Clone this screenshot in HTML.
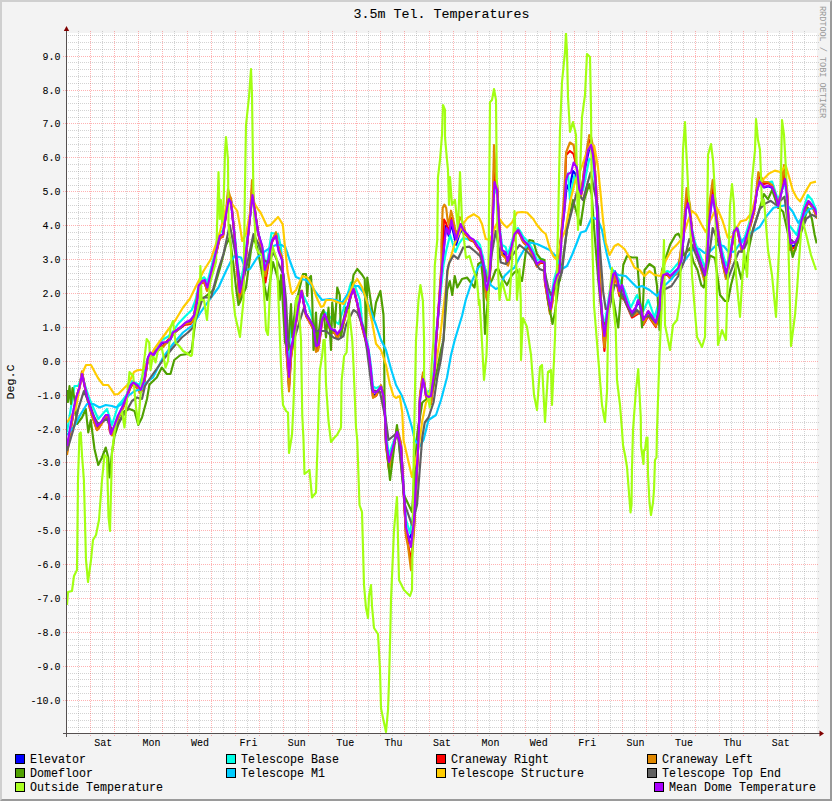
<!DOCTYPE html>
<html><head><meta charset="utf-8"><style>
html,body{margin:0;padding:0;background:#f3f3f3;}
body{width:832px;height:801px;overflow:hidden;position:relative;}
.frame{position:absolute;left:0;top:0;width:832px;height:801px;box-sizing:border-box;background:#f3f3f3;
border-top:2px solid #cfcfcf;border-left:2px solid #cfcfcf;border-right:2px solid #9a9a9a;border-bottom:2px solid #9a9a9a;}
svg{position:absolute;left:0;top:0;}
text{font-family:"Liberation Mono",monospace;}
</style></head><body><div class="frame"></div>
<svg width="832" height="801" viewBox="0 0 832 801">
<defs><clipPath id="pc"><rect x="67" y="33" width="750" height="700"/></clipPath></defs>
<rect x="67" y="33" width="750" height="700" fill="#fff"/><g stroke="rgba(128,128,128,0.35)" stroke-width="1" stroke-dasharray="1 1" shape-rendering="crispEdges"><line x1="66" y1="727.5" x2="819" y2="727.5"/><line x1="66" y1="720.5" x2="819" y2="720.5"/><line x1="66" y1="713.5" x2="819" y2="713.5"/><line x1="66" y1="706.5" x2="819" y2="706.5"/><line x1="66" y1="693.5" x2="819" y2="693.5"/><line x1="66" y1="686.5" x2="819" y2="686.5"/><line x1="66" y1="679.5" x2="819" y2="679.5"/><line x1="66" y1="673.5" x2="819" y2="673.5"/><line x1="66" y1="659.5" x2="819" y2="659.5"/><line x1="66" y1="652.5" x2="819" y2="652.5"/><line x1="66" y1="645.5" x2="819" y2="645.5"/><line x1="66" y1="639.5" x2="819" y2="639.5"/><line x1="66" y1="625.5" x2="819" y2="625.5"/><line x1="66" y1="618.5" x2="819" y2="618.5"/><line x1="66" y1="612.5" x2="819" y2="612.5"/><line x1="66" y1="605.5" x2="819" y2="605.5"/><line x1="66" y1="591.5" x2="819" y2="591.5"/><line x1="66" y1="584.5" x2="819" y2="584.5"/><line x1="66" y1="578.5" x2="819" y2="578.5"/><line x1="66" y1="571.5" x2="819" y2="571.5"/><line x1="66" y1="557.5" x2="819" y2="557.5"/><line x1="66" y1="551.5" x2="819" y2="551.5"/><line x1="66" y1="544.5" x2="819" y2="544.5"/><line x1="66" y1="537.5" x2="819" y2="537.5"/><line x1="66" y1="523.5" x2="819" y2="523.5"/><line x1="66" y1="517.5" x2="819" y2="517.5"/><line x1="66" y1="510.5" x2="819" y2="510.5"/><line x1="66" y1="503.5" x2="819" y2="503.5"/><line x1="66" y1="490.5" x2="819" y2="490.5"/><line x1="66" y1="483.5" x2="819" y2="483.5"/><line x1="66" y1="476.5" x2="819" y2="476.5"/><line x1="66" y1="469.5" x2="819" y2="469.5"/><line x1="66" y1="456.5" x2="819" y2="456.5"/><line x1="66" y1="449.5" x2="819" y2="449.5"/><line x1="66" y1="442.5" x2="819" y2="442.5"/><line x1="66" y1="435.5" x2="819" y2="435.5"/><line x1="66" y1="422.5" x2="819" y2="422.5"/><line x1="66" y1="415.5" x2="819" y2="415.5"/><line x1="66" y1="408.5" x2="819" y2="408.5"/><line x1="66" y1="401.5" x2="819" y2="401.5"/><line x1="66" y1="388.5" x2="819" y2="388.5"/><line x1="66" y1="381.5" x2="819" y2="381.5"/><line x1="66" y1="374.5" x2="819" y2="374.5"/><line x1="66" y1="368.5" x2="819" y2="368.5"/><line x1="66" y1="354.5" x2="819" y2="354.5"/><line x1="66" y1="347.5" x2="819" y2="347.5"/><line x1="66" y1="340.5" x2="819" y2="340.5"/><line x1="66" y1="334.5" x2="819" y2="334.5"/><line x1="66" y1="320.5" x2="819" y2="320.5"/><line x1="66" y1="313.5" x2="819" y2="313.5"/><line x1="66" y1="307.5" x2="819" y2="307.5"/><line x1="66" y1="300.5" x2="819" y2="300.5"/><line x1="66" y1="286.5" x2="819" y2="286.5"/><line x1="66" y1="279.5" x2="819" y2="279.5"/><line x1="66" y1="273.5" x2="819" y2="273.5"/><line x1="66" y1="266.5" x2="819" y2="266.5"/><line x1="66" y1="252.5" x2="819" y2="252.5"/><line x1="66" y1="246.5" x2="819" y2="246.5"/><line x1="66" y1="239.5" x2="819" y2="239.5"/><line x1="66" y1="232.5" x2="819" y2="232.5"/><line x1="66" y1="218.5" x2="819" y2="218.5"/><line x1="66" y1="212.5" x2="819" y2="212.5"/><line x1="66" y1="205.5" x2="819" y2="205.5"/><line x1="66" y1="198.5" x2="819" y2="198.5"/><line x1="66" y1="185.5" x2="819" y2="185.5"/><line x1="66" y1="178.5" x2="819" y2="178.5"/><line x1="66" y1="171.5" x2="819" y2="171.5"/><line x1="66" y1="164.5" x2="819" y2="164.5"/><line x1="66" y1="151.5" x2="819" y2="151.5"/><line x1="66" y1="144.5" x2="819" y2="144.5"/><line x1="66" y1="137.5" x2="819" y2="137.5"/><line x1="66" y1="130.5" x2="819" y2="130.5"/><line x1="66" y1="117.5" x2="819" y2="117.5"/><line x1="66" y1="110.5" x2="819" y2="110.5"/><line x1="66" y1="103.5" x2="819" y2="103.5"/><line x1="66" y1="96.5" x2="819" y2="96.5"/><line x1="66" y1="83.5" x2="819" y2="83.5"/><line x1="66" y1="76.5" x2="819" y2="76.5"/><line x1="66" y1="69.5" x2="819" y2="69.5"/><line x1="66" y1="62.5" x2="819" y2="62.5"/><line x1="66" y1="49.5" x2="819" y2="49.5"/><line x1="66" y1="42.5" x2="819" y2="42.5"/><line x1="66" y1="35.5" x2="819" y2="35.5"/><line x1="78.5" y1="31" x2="78.5" y2="736"/><line x1="102.5" y1="31" x2="102.5" y2="736"/><line x1="126.5" y1="31" x2="126.5" y2="736"/><line x1="150.5" y1="31" x2="150.5" y2="736"/><line x1="174.5" y1="31" x2="174.5" y2="736"/><line x1="199.5" y1="31" x2="199.5" y2="736"/><line x1="223.5" y1="31" x2="223.5" y2="736"/><line x1="247.5" y1="31" x2="247.5" y2="736"/><line x1="271.5" y1="31" x2="271.5" y2="736"/><line x1="295.5" y1="31" x2="295.5" y2="736"/><line x1="320.5" y1="31" x2="320.5" y2="736"/><line x1="344.5" y1="31" x2="344.5" y2="736"/><line x1="368.5" y1="31" x2="368.5" y2="736"/><line x1="392.5" y1="31" x2="392.5" y2="736"/><line x1="416.5" y1="31" x2="416.5" y2="736"/><line x1="441.5" y1="31" x2="441.5" y2="736"/><line x1="465.5" y1="31" x2="465.5" y2="736"/><line x1="489.5" y1="31" x2="489.5" y2="736"/><line x1="513.5" y1="31" x2="513.5" y2="736"/><line x1="537.5" y1="31" x2="537.5" y2="736"/><line x1="562.5" y1="31" x2="562.5" y2="736"/><line x1="586.5" y1="31" x2="586.5" y2="736"/><line x1="610.5" y1="31" x2="610.5" y2="736"/><line x1="634.5" y1="31" x2="634.5" y2="736"/><line x1="658.5" y1="31" x2="658.5" y2="736"/><line x1="683.5" y1="31" x2="683.5" y2="736"/><line x1="707.5" y1="31" x2="707.5" y2="736"/><line x1="731.5" y1="31" x2="731.5" y2="736"/><line x1="755.5" y1="31" x2="755.5" y2="736"/><line x1="779.5" y1="31" x2="779.5" y2="736"/><line x1="804.5" y1="31" x2="804.5" y2="736"/></g><g stroke="rgba(255,0,0,0.30)" stroke-width="1" stroke-dasharray="1 1" shape-rendering="crispEdges"><line x1="63" y1="700.5" x2="819" y2="700.5"/><line x1="63" y1="666.5" x2="819" y2="666.5"/><line x1="63" y1="632.5" x2="819" y2="632.5"/><line x1="63" y1="598.5" x2="819" y2="598.5"/><line x1="63" y1="564.5" x2="819" y2="564.5"/><line x1="63" y1="530.5" x2="819" y2="530.5"/><line x1="63" y1="496.5" x2="819" y2="496.5"/><line x1="63" y1="462.5" x2="819" y2="462.5"/><line x1="63" y1="429.5" x2="819" y2="429.5"/><line x1="63" y1="395.5" x2="819" y2="395.5"/><line x1="63" y1="361.5" x2="819" y2="361.5"/><line x1="63" y1="327.5" x2="819" y2="327.5"/><line x1="63" y1="293.5" x2="819" y2="293.5"/><line x1="63" y1="259.5" x2="819" y2="259.5"/><line x1="63" y1="225.5" x2="819" y2="225.5"/><line x1="63" y1="191.5" x2="819" y2="191.5"/><line x1="63" y1="157.5" x2="819" y2="157.5"/><line x1="63" y1="123.5" x2="819" y2="123.5"/><line x1="63" y1="90.5" x2="819" y2="90.5"/><line x1="63" y1="56.5" x2="819" y2="56.5"/><line x1="90.5" y1="31" x2="90.5" y2="736"/><line x1="114.5" y1="31" x2="114.5" y2="736"/><line x1="138.5" y1="31" x2="138.5" y2="736"/><line x1="162.5" y1="31" x2="162.5" y2="736"/><line x1="187.5" y1="31" x2="187.5" y2="736"/><line x1="211.5" y1="31" x2="211.5" y2="736"/><line x1="235.5" y1="31" x2="235.5" y2="736"/><line x1="259.5" y1="31" x2="259.5" y2="736"/><line x1="283.5" y1="31" x2="283.5" y2="736"/><line x1="308.5" y1="31" x2="308.5" y2="736"/><line x1="332.5" y1="31" x2="332.5" y2="736"/><line x1="356.5" y1="31" x2="356.5" y2="736"/><line x1="380.5" y1="31" x2="380.5" y2="736"/><line x1="404.5" y1="31" x2="404.5" y2="736"/><line x1="429.5" y1="31" x2="429.5" y2="736"/><line x1="453.5" y1="31" x2="453.5" y2="736"/><line x1="477.5" y1="31" x2="477.5" y2="736"/><line x1="501.5" y1="31" x2="501.5" y2="736"/><line x1="525.5" y1="31" x2="525.5" y2="736"/><line x1="550.5" y1="31" x2="550.5" y2="736"/><line x1="574.5" y1="31" x2="574.5" y2="736"/><line x1="598.5" y1="31" x2="598.5" y2="736"/><line x1="622.5" y1="31" x2="622.5" y2="736"/><line x1="646.5" y1="31" x2="646.5" y2="736"/><line x1="671.5" y1="31" x2="671.5" y2="736"/><line x1="695.5" y1="31" x2="695.5" y2="736"/><line x1="719.5" y1="31" x2="719.5" y2="736"/><line x1="743.5" y1="31" x2="743.5" y2="736"/><line x1="767.5" y1="31" x2="767.5" y2="736"/><line x1="792.5" y1="31" x2="792.5" y2="736"/></g><g clip-path="url(#pc)"><path d="M67 450.154 L68 444.096 L70 432.002 L72 419.765 L74 409.066 L75 403.674 L76 398.777 L78 392.019 L79 388.62 L80 384.097 L82 372.385 L84 382.097 L86 391.693 L87 396.467 L88 400.015 L90 407.078 L92 414.116 L94 419.788 L96 425.418 L97 428.236 L98 427.045 L100 424.684 L102 421.64 L104 418.222 L105 416.549 L106 415.309 L108 415.363 L110 430.122 L112 433.255 L114 428.165 L116 422.654 L118 417.016 L120 412.679 L122 408.558 L123 406.537 L124 403.982 L126 398.47 L127 395.693 L128 392.899 L130 387.287 L132 383.971 L133 383.015 L134 383.478 L136 385.386 L138 387.303 L140 390.918 L142 388.603 L144 382.591 L146 370.531 L148 357.63 L150 353.564 L152 354.468 L153 355.754 L154 354.476 L156 351.892 L158 349.038 L160 345.98 L161 344.43 L162 343.259 L164 343.219 L166 343.2 L168 342.127 L170 340.413 L172 335.996 L173 333.334 L174 332.687 L176 331.387 L178 329.911 L180 328.337 L181 327.554 L182 326.736 L184 324.924 L185 324.033 L186 323.408 L188 322.683 L190 321.968 L192 319.878 L194 317.302 L196 306.848 L197 302.122 L198 291.873 L200 283.925 L202 281.46 L204 280.849 L206 285.219 L207 288.823 L208 286.649 L210 278.396 L212 270.058 L213 265.912 L214 261.654 L216 252.928 L218 244.243 L219 239.904 L220 236.536 L222 235.636 L223 235.104 L224 227.855 L226 213.179 L228 200.942 L230 198.305 L231 199.88 L232 210.021 L234 230.38 L236 253.161 L238 277.377 L239 289.499 L240 297.327 L242 287.055 L243 281.877 L244 274.404 L246 254.952 L248 235.578 L250 215.993 L252 196.359 L254 202.893 L256 218.12 L258 231.418 L260 240.037 L262 247.015 L264 266.187 L266 269.705 L268 262.893 L270 252.626 L272 241.084 L274 236.965 L276 233.766 L278 246.132 L280 253.017 L282 258.057 L283 273.154 L284 291.922 L285 314.361 L286 341.582 L288 368.573 L289 384.841 L290 369.786 L291 354.732 L292 348.198 L294 335.105 L295 328.557 L296 321.784 L298 308.441 L300 297.319 L301 292.141 L302 291.679 L303 298.148 L304 303.988 L306 314.516 L308 317.972 L310 321.448 L311 323.172 L312 325.324 L313 327.46 L314 332.647 L316 349.167 L318 348.137 L320 336.016 L322 320.209 L324 315.331 L326 317.13 L327 320.061 L328 322.569 L330 327.667 L331 330.234 L332 330.599 L334 331.285 L335 331.606 L336 333.856 L337 336.112 L338 334.802 L340 332.251 L341 331.004 L342 327.398 L344 320.17 L346 312.891 L348 305.542 L350 298.144 L351 294.42 L352 291.776 L353 289.112 L354 289.791 L356 297.785 L357 301.73 L358 306.601 L360 316.193 L362 325.604 L364 333.089 L366 340.543 L368 348.576 L370 363.926 L371 372.816 L372 384.001 L373 395.155 L374 394.86 L376 394.233 L378 390.807 L380 387.502 L381 385.896 L382 389.5 L383 393.152 L384 401.84 L385 415.571 L386 442.896 L388 458.637 L389 466.485 L390 462.074 L392 453.046 L394 443.744 L396 434.37 L397 429.698 L398 433.311 L400 440.77 L401 444.598 L402 461.966 L404 496.87 L406 531.999 L408 541.03 L411 535 L414 525.761 L416 487.249 L418 448.989 L419 423.015 L420 396.561 L422 382.264 L423 375.195 L424 381.052 L426 395.316 L428 398.784 L430 400.18 L431 400.507 L432 392.417 L434 379.191 L436 342.127 L442.6 265 L445.7 226 L448.8 236 L451.4 224 L456.2 244.8 L460.6 230 L463.2 233 L466 233.541 L468 235.947 L470 238.51 L472 239.526 L473 239.88 L474 240.604 L476 243.969 L477 245.698 L478 246.975 L480 249.475 L482 258.865 L483 263.65 L484 272.753 L485 283.288 L486 292.058 L487 295.654 L488 289.088 L489 282.496 L490 270.928 L492 237.898 L494 188 L496 182.117 L497 185.691 L498 202.956 L499 220.268 L500 233.649 L502 252.471 L504 254.154 L505 254.912 L506 256.666 L507 261.566 L508 262.863 L510 254.795 L512 245.834 L514 236.408 L516 232.35 L518 230.039 L520 233.636 L522 238.061 L523 240.237 L524 241.562 L526 243.594 L528 245.576 L530 249.081 L532 252.791 L533 254.585 L534 257.081 L536 262.509 L537 265.2 L538 264.061 L540 261.832 L542 261.38 L544 262.012 L545 281.389 L546 287.174 L548 298.817 L550 310.47 L552 301.984 L553 294.455 L554 288.003 L556 281.246 L557 277.878 L561.75 232 L564.25 212 L566.75 185 L569.25 190 L573 171 L575.5 174 L579 188 L581 194 L585.5 166 L589 150 L591.1 147 L594 160 L596.75 207 L601.25 306 L604.4 340 L607.5 312 L610 295.377 L611 287.888 L612 281.063 L613 274.447 L614 272.14 L615 271.295 L616 274.252 L617 277.653 L618 282.269 L619 288.687 L620 290.561 L622 285.232 L624 293.899 L626 300.749 L628 306.956 L630 310.823 L632 314.368 L634 311.216 L635 309.637 L636 307.622 L638 300.878 L640 305.713 L642 314.964 L643 320.415 L644 320.262 L646 316.263 L648 312.33 L650 314.567 L652 317.708 L654 321.784 L655 323.852 L656 324.544 L658 317.55 L659 314.043 L660 301.366 L662 281.678 L663 275.846 L664 274.206 L666 273.742 L667 273.53 L668 274.226 L670 276.85 L672 275.518 L674 273.998 L676 272.469 L678 270.854 L680 266.238 L681 263.587 L682 254.079 L683 243.797 L684 233.048 L685 219.723 L686 207.377 L688 200.516 L690 212.275 L692 231.109 L694 242.82 L696 250.809 L698 256.624 L699 259.513 L700 262.757 L702 269.242 L703 272.476 L704 275.788 L705 279.114 L706 271.448 L707 262.558 L708 244.904 L709 225.049 L710 213.854 L712 197.226 L714 200.889 L715 208.203 L716 216.005 L718 232.311 L720 245.362 L722 257.914 L724 267.132 L726 275.682 L728 268.538 L730 257.523 L732 244.754 L734 231.42 L736 228.358 L737 227.99 L738 231.075 L740 242.213 L742 249.812 L744 246.798 L746 240.199 L748 233.072 L750 225.919 L752 218.275 L754 210.677 L756 197.637 L757 190.799 L758 187.189 L759 183.565 L760 181.504 L762 184.68 L763 186.233 L764 187.493 L766 186.903 L768 186.263 L770 186.978 L772 187.684 L774 192.632 L775 195.174 L776 198.527 L778 206.8 L780 199.39 L781 194.309 L782 189.522 L784 181.318 L785 177.228 L786 185.605 L787 195.394 L788 211.845 L789 229.986 L790 241.441 L792 246.487 L794 245.759 L795 245.382 L796 243.894 L798 239.405 L800 228.969 L802 219.744 L804 212.03 L805 208.166 L806 205.949 L808 201.712 L810 202.785 L811 204.207 L812 205.647 L814 208.977 L816 213.936 L817 216.842" fill="none" stroke="#0000ff" stroke-width="2.15" stroke-linejoin="round"/><path d="M67 432 L74.5 386 L78.25 386 L82 376 L89.5 399 L98.25 419 L107 409 L112 425 L118.25 405 L122 401 L127 394 L132 381 L139.5 385 L148 358 L150 358 L160.5 341 L170.5 335 L178 324 L185.5 316 L191.75 310 L195.5 300 L198 288.827 L200 281.575 L202 278.707 L204 277.251 L206 279.781 L207 282.177 L208 279.851 L210 272.104 L212 264.442 L213 260.588 L214 256.606 L216 248.372 L218 240.097 L219 235.956 L220 232.656 L222 231.095 L223 230.396 L224 224.311 L226 212.321 L228 202.739 L230 201.084 L231 202.62 L232 211.145 L234 228.12 L236 246.839 L238 266.623 L239 276.501 L240 282.84 L242 274.445 L243 270.29 L244 264.296 L246 248.548 L248 232.722 L250 216.507 L252 200.141 L254 205.179 L255 222 L263.5 252 L266 270 L271.5 233 L278.1 234 L280.9 247 L284 285 L285 307.139 L286 329.918 L288 352.927 L289 366.659 L290 330 L295 315 L301 291 L308.5 306 L316 331 L318.5 337.5 L323.5 311 L333.5 320 L338.5 324 L343.5 309 L351 282.5 L353.5 282.5 L360 300 L362 321.896 L364 329.411 L366 336.957 L368 344.924 L370 358.774 L371 366.684 L372 376.499 L373 386.345 L374 386.974 L376 388.267 L378 387.293 L380 386.198 L381 385.604 L382 389.2 L383 392.748 L384 400.327 L385 411.929 L386 434.604 L388 448.197 L389 455.015 L390 451.926 L392 445.954 L394 440.256 L396 434.63 L397 431.802 L398 435.689 L400 443.23 L401 446.902 L402 461.534 L404 490.63 L406 519.501 L408 526.47 L410 533.316 L412 520 L414 511.739 L416 479.14 L418 446.289 L419 424.085 L420 401.401 L422 387.39 L423 380.305 L424 383.591 L426 392.184 L428 391.916 L430 390.12 L431 388.993 L432 381.083 L434 367.909 L436 335.373 L443.5 265 L446.6 249 L450.1 235 L455.35 252 L458.85 244 L463 238 L470 240 L477.2 241.3 L480 245 L482 253.25 L483 256.773 L484 263.847 L485 272.112 L486 279.042 L487 281.846 L488 276.412 L489 271.004 L490 261.572 L492 234.602 L494 194.656 L496 188.983 L497 191.809 L498 205.744 L499 219.632 L500 230.251 L502 245.029 L504 246.013 L505 246.588 L506 248.131 L507 252.42 L508 253.844 L510 247.943 L512 241 L514 233.358 L516 229.95 L518 227.994 L520 230.864 L522 234.439 L523 236.263 L524 237.438 L526 239.406 L528 241.424 L530 244.719 L532 248.209 L533 250.015 L534 252.419 L536 257.658 L537 260.3 L538 259.839 L540 258.868 L542 259.12 L544 260.088 L545 276.111 L546 280.993 L548 290.683 L550 299.887 L552 292.285 L553 285.661 L554 279.804 L556 273.023 L557 269.622 L558 268.294 L559 266.943 L560 258.506 L561 242.981 L562 228.929 L564 209.805 L566 181.048 L568 173.432 L570 200 L574.25 176 L579 190 L583 190 L589.25 159 L593 160 L597 210 L598.75 278 L602.5 316 L604.4 326 L607.5 306 L613 270 L619.5 280 L624.5 290 L630.75 307.5 L637 295 L643.25 311 L648.25 300 L654.5 317.5 L659.5 300 L663 274.381 L664 272.716 L666 271.637 L667 271.078 L668 271.23 L670 272.458 L672 270.274 L674 267.892 L676 265.562 L678 263.321 L680 258.862 L681 256.422 L682 248.403 L683 239.776 L684 230.793 L685 219.728 L686 209.49 L688 203.684 L690 213.225 L692 228.676 L694 238.384 L696 244.976 L698 249.638 L699 251.987 L700 254.596 L702 259.819 L703 262.439 L704 265.112 L705 267.786 L706 261.481 L707 254.18 L708 239.717 L709 223.475 L710 214.341 L712 200.825 L714 203.945 L715 209.963 L716 216.323 L718 229.446 L720 239.885 L722 250.162 L724 257.968 L726 265.418 L728 260.032 L730 251.384 L732 241.094 L734 230.08 L736 227.216 L737 226.653 L738 228.861 L740 237.214 L742 242.683 L744 239.455 L746 233.301 L748 226.769 L750 220.264 L752 213.323 L754 206.286 L756 194.72 L757 188.701 L758 185.348 L759 182.009 L760 179.977 L762 182.006 L763 183.055 L764 183.913 L765 183 L772.1 181.6 L778 200 L785 182 L789 225 L796.8 235 L803 210 L807.8 195 L812 200 L817 212" fill="none" stroke="#00ffe6" stroke-width="2.15" stroke-linejoin="round"/><path d="M67 452.285 L68 446.155 L70 433.922 L72 421.518 L74 410.653 L75 405.169 L76 400.186 L78 393.302 L79 389.837 L80 385.257 L82 373.362 L84 383.257 L86 393.012 L87 397.861 L88 401.459 L90 408.614 L92 415.739 L94 421.465 L96 427.141 L97 429.983 L98 428.74 L100 426.281 L102 423.143 L104 419.641 L105 417.933 L106 416.671 L108 416.736 L110 431.787 L112 435.006 L114 429.857 L116 424.285 L118 418.586 L120 414.214 L122 410.07 L123 408.044 L124 405.479 L126 399.931 L127 397.132 L128 394.312 L130 388.644 L132 385.316 L133 384.369 L134 384.869 L136 386.878 L138 388.899 L140 392.642 L142 390.338 L144 384.267 L146 372.037 L148 358.957 L150 355 L163 346 L175.5 331 L184.25 325 L190.5 324 L193 321 L198 293.227 L200 285.21 L202 282.785 L204 282.259 L206 286.812 L207 290.538 L208 288.378 L210 280.075 L212 271.67 L213 267.494 L214 263.209 L216 254.433 L218 245.707 L219 241.348 L220 237.974 L222 237.14 L223 236.624 L224 229.26 L226 214.314 L228 195 L230 199.077 L231 200.656 L232 210.959 L234 231.656 L236 254.843 L238 279.502 L239 291.849 L240 299.825 L242 289.366 L243 284.086 L244 276.465 L246 256.643 L248 236.913 L250 216.991 L252 188 L254 203.714 L256 219.244 L258 232.802 L260 241.584 L265.4 282.5 L270 254.171 L272 242.348 L274 238.031 L276 234.619 L278 247.059 L280 253.949 L282 258.968 L283 274.285 L284 293.34 L285 316.133 L286 343.798 L288 371.188 L289 387.71 L290 372.343 L291 356.978 L292 350.288 L294 336.876 L295 330.169 L296 323.241 L298 309.629 L300 298.335 L301 293.088 L302 292.652 L303 299.257 L304 305.206 L306 315.919 L308 319.427 L310 322.957 L311 324.707 L312 326.889 L313 329.052 L314 334.316 L316 351.101 L318 350.024 L320 337.663 L322 321.551 L324 316.57 L326 318.39 L327 321.373 L328 323.932 L330 329.15 L331 331.78 L332 332.169 L334 332.892 L335 333.227 L336 335.528 L337 337.834 L338 336.512 L340 333.951 L341 332.705 L342 329.058 L344 321.744 L346 314.369 L348 306.91 L350 299.393 L351 295.604 L352 292.911 L353 290.194 L354 290.878 L356 298.985 L357 302.975 L358 307.901 L360 317.572 L362 327.025 L364 334.506 L366 341.952 L368 349.991 L370 365.492 L371 374.479 L372 385.802 L373 397.086 L374 396.698 L376 395.88 L378 392.209 L380 388.683 L381 386.976 L382 390.58 L383 394.243 L384 403.041 L385 416.986 L386 444.776 L388 460.731 L389 468.683 L390 464.139 L392 454.805 L394 445.143 L396 435.394 L397 430.538 L398 434.123 L400 441.574 L401 445.418 L402 463.059 L404 498.544 L406 534.299 L408 543.536 L411 562 L414 528.214 L416 489.11 L418 450.309 L419 423.958 L420 397.127 L422 382.801 L423 375.734 L424 381.848 L426 396.679 L428 400.52 L430 402.237 L431 402.709 L432 394.6 L434 381.369 L436 343.853 L441.8 265 L444 219.5 L446 223 L448.8 232 L451.2 218 L453.6 228 L456.2 234 L459 228 L461 224 L463.2 232 L466 234.989 L468 237.417 L470 240.002 L472 240.986 L473 241.308 L474 242 L476 245.341 L477 247.067 L478 248.342 L480 250.87 L482 260.477 L483 265.388 L484 274.694 L485 285.456 L486 294.409 L487 298.084 L488 291.406 L489 284.695 L490 272.913 L492 239.277 L494 170 L496 182.481 L497 186.129 L498 203.728 L499 221.381 L500 235.039 L502 254.265 L504 256.018 L505 256.795 L506 258.569 L507 263.531 L508 264.814 L510 256.53 L512 247.367 L514 237.763 L516 233.64 L518 231.294 L520 234.964 L522 239.473 L523 241.684 L524 243.025 L526 245.063 L528 247.041 L530 250.567 L532 254.299 L533 256.092 L534 258.597 L536 264.044 L537 266.74 L538 265.533 L540 263.178 L542 262.656 L544 263.255 L545 282.967 L546 288.842 L548 300.681 L550 312.578 L552 304.004 L553 296.384 L554 289.873 L556 283.118 L557 279.754 L561.75 230 L564.25 205 L566.1 155 L569.9 151 L573.6 154 L576.75 168 L581 196 L585.5 160 L589.25 140 L591.1 141 L593.6 152 L596 185 L598.25 235 L601.25 309 L604.4 351 L607.5 316 L615 276 L619.5 296 L624.5 300 L632 317.5 L640.75 312 L643.25 325 L648.25 316 L655.75 327 L659.5 315 L663 277.043 L664 275.405 L666 275.003 L667 274.826 L668 275.576 L670 278.339 L672 277.093 L674 275.659 L676 274.209 L678 272.657 L683.85 230 L686.6 195 L690 210 L692.1 234 L696 252.443 L698 258.373 L699 261.315 L700 264.623 L702 271.234 L703 274.53 L704 277.906 L705 281.297 L709.25 210 L712.7 186 L715.4 205 L718.2 232 L722 259.739 L724 269.098 L726 277.758 L728 270.438 L730 259.187 L732 246.17 L734 232.603 L736 229.522 L737 229.173 L738 232.346 L740 243.763 L742 251.575 L744 248.582 L746 241.938 L748 234.753 L750 227.535 L752 219.82 L754 212.166 L757 188 L758.35 176 L763.85 184 L768 183 L772.1 186 L775.5 196 L778.3 208 L781.7 187 L784 170 L787.2 194 L789.25 238 L790 250 L795.4 247 L796 245.809 L798 241.207 L800 230.563 L802 221.188 L804 213.377 L805 209.463 L806 207.224 L808 202.951 L810 204.089 L811 205.56 L812 207.048 L814 210.472 L816 215.544 L817 218.511" fill="none" stroke="#ff0000" stroke-width="2.15" stroke-linejoin="round"/><path d="M67 455 L70 434.683 L72 421.777 L74 410.412 L75 404.653 L76 399.413 L78 392.154 L79 388.49 L80 383.735 L82 371.292 L84 381.735 L86 391.968 L87 397.041 L88 400.788 L90 408.221 L92 415.608 L94 421.498 L96 427.312 L97 430.225 L98 428.827 L100 426.072 L102 422.652 L104 418.899 L105 417.087 L106 415.757 L108 415.854 L110 431.78 L112 435.259 L114 429.936 L116 424.178 L118 418.295 L120 413.821 L122 409.605 L123 407.566 L124 404.968 L126 399.313 L127 396.447 L128 393.552 L130 387.717 L132 384.349 L133 383.428 L134 384.04 L136 386.355 L138 388.686 L140 392.813 L142 390.543 L144 384.293 L146 371.555 L148 357.935 L150 356 L163 347 L175.5 332 L184.25 324 L190.5 323 L193 321 L198 292.291 L200 284.064 L202 281.761 L204 281.489 L206 286.594 L207 290.682 L208 288.568 L210 280.112 L212 271.505 L213 267.241 L214 262.874 L216 253.95 L218 245.101 L219 240.683 L220 237.288 L222 236.652 L223 236.187 L224 228.473 L226 212.722 L228 189 L230 196.393 L231 197.985 L232 208.772 L234 230.484 L236 254.889 L238 280.878 L239 293.898 L240 302.321 L242 291.299 L243 285.712 L244 277.648 L246 256.714 L248 235.92 L250 214.987 L252 180 L254 201.178 L256 217.617 L258 231.953 L260 241.226 L265.4 276 L270 253.807 L272 241.139 L274 236.23 L276 232.179 L278 244.838 L280 251.745 L282 256.702 L283 272.678 L284 292.594 L285 316.449 L286 345.447 L288 374.032 L289 391.315 L290 375.015 L291 358.717 L292 351.557 L294 337.188 L295 330.003 L296 322.612 L298 308.194 L300 296.381 L301 290.93 L302 290.57 L303 297.582 L304 303.859 L306 315.129 L308 318.79 L310 322.486 L311 324.31 L312 326.583 L313 328.829 L314 334.324 L316 351.901 L318 350.686 L320 337.601 L322 320.576 L324 315.286 L326 317.168 L327 320.31 L328 323.023 L330 328.6 L331 331.42 L332 331.878 L334 332.713 L335 333.09 L336 335.541 L337 338.001 L338 336.643 L340 334.051 L341 332.807 L342 329.037 L344 321.466 L346 313.803 L348 306.015 L350 298.139 L351 294.156 L352 291.317 L353 288.441 L354 289.138 L356 297.585 L357 301.713 L358 306.801 L360 316.708 L362 326.288 L364 333.76 L366 341.178 L368 349.236 L370 365.188 L371 374.469 L372 386.203 L373 397.878 L374 397.214 L376 395.82 L378 391.413 L380 387.224 L381 385.213 L382 388.82 L383 392.514 L384 401.646 L385 416.229 L386 445.414 L388 462.013 L389 470.274 L390 465.333 L392 455.083 L394 444.34 L396 433.465 L397 428.056 L398 431.56 L400 438.987 L401 442.876 L402 461.339 L404 498.567 L406 536.198 L408 546.054 L411 570 L414 530.57 L416 489.692 L418 449.269 L419 421.787 L420 393.825 L422 379.413 L423 372.351 L424 379.236 L426 395.769 L428 400.731 L430 403.405 L431 404.313 L432 396.15 L434 382.903 L436 344.029 L441.4 265 L441.4 244 L442.7 208 L444.4 204.6 L446.2 208 L447.5 219.5 L448.8 224.7 L451 210.7 L452.7 217 L455.35 230 L457.1 236 L459.7 217 L462.3 221 L466 234.334 L468 236.827 L470 239.475 L472 240.366 L473 240.592 L474 241.189 L476 244.458 L477 246.174 L478 247.441 L480 250.055 L482 260.312 L483 265.602 L484 275.516 L485 286.959 L486 296.464 L487 300.376 L488 293.359 L489 286.293 L490 273.87 L492 238.416 L494 145 L496 178.571 L497 182.444 L498 201.041 L499 219.722 L500 234.208 L502 254.648 L504 256.611 L505 257.442 L506 259.28 L507 264.425 L508 265.67 L510 256.736 L512 246.968 L514 236.828 L516 232.511 L518 230.057 L520 233.946 L522 238.71 L523 241.026 L524 242.412 L526 244.469 L528 246.437 L530 250.025 L532 253.824 L533 255.613 L534 258.145 L536 263.649 L537 266.36 L538 264.95 L540 262.217 L542 261.485 L544 261.982 L545 282.7 L546 288.846 L548 301.271 L550 313.903 L552 305.064 L553 297.172 L554 290.483 L556 283.735 L557 280.381 L561.75 227.5 L564.25 192.5 L566.1 152.5 L569.9 142.5 L573.6 145 L576.75 167.5 L581 196 L585.5 157.5 L589.25 135 L591.1 137.5 L593.6 149 L596 185 L598.25 230 L601.25 308 L604.4 347.5 L607.5 315 L615 275 L619.5 294 L624.5 299 L632 316 L640.75 311 L643.25 324 L648.25 315 L655.75 326 L659.5 314 L663 275.633 L664 274.002 L666 273.784 L667 273.712 L668 274.625 L670 277.806 L672 276.816 L674 275.641 L676 274.431 L678 273.067 L683.85 225 L686.6 188 L690 205 L692.1 232 L696 252.342 L698 258.619 L699 261.723 L700 265.222 L702 272.211 L703 275.691 L704 279.259 L705 282.845 L709.25 205 L712.7 180 L715.4 200 L718.2 230 L722 260.215 L724 269.997 L726 278.987 L728 271.14 L730 259.179 L732 245.418 L734 231.155 L736 228.014 L737 227.724 L738 231.16 L740 243.412 L742 251.864 L744 248.935 L746 242.158 L748 234.794 L750 227.381 L752 219.456 L754 211.634 L757 185 L758.35 172 L763.85 182 L768 182 L772.1 185 L775.5 195 L778.3 208 L781.7 185 L784 165 L787.2 190 L789.25 236 L792 252 L795.4 250 L796 246.553 L798 241.614 L800 230.345 L802 220.52 L804 212.418 L805 208.355 L806 206.05 L808 201.669 L810 203.001 L811 204.62 L812 206.25 L814 209.958 L816 215.371 L817 218.516" fill="none" stroke="#e08800" stroke-width="2.15" stroke-linejoin="round"/><path d="M67 390 L68 402 L69.5 386 L71 404 L72.5 388 L74.5 399 L77 424 L82 417.5 L85.75 409 L88.25 432.5 L90.75 420 L94.5 449 L98.25 465 L102 457.5 L105.75 447.5 L108.25 457.5 L109.5 477.5 L112 452.5 L114.5 436 L119.5 421 L124.5 411 L129.5 409 L134.5 411 L138.25 425 L142 417.5 L147 399 L149.5 384 L150 384 L156.75 377.5 L161.75 367.5 L166.75 374 L170.5 374 L174.25 360 L180.5 355 L188 354 L191.75 350 L194.25 330 L196.75 311 L201 300 L213.5 290 L219.75 269 L226 245 L229.75 237.5 L233.5 265 L236 287.5 L238.5 305 L246 287.5 L251 250 L253.5 237.5 L257.25 247.5 L263.5 281 L267.25 300 L273 262 L278.5 281 L279.75 300 L281 275 L282.25 294 L285 342 L288 350 L291 304 L292.25 337.5 L296 300 L298 295 L303 274 L306 274 L307.25 296 L308.5 279 L311 276 L312.25 300 L313.5 350 L316 312.5 L317.25 344 L321 315 L323.5 310 L326 337.5 L328.5 307.5 L331 350 L332.25 302.5 L334.75 327.5 L337.25 287.5 L339.75 295 L341 337.5 L343.5 320 L346 307.5 L348.5 309 L353.5 275 L357.25 269 L362.25 275 L364.75 279 L366 340 L367.25 277.5 L373.5 320 L376 302.5 L380.4 291 L383.5 315 L384.1 340 L384.5 395 L386 440 L390 480 L397 425 L404 495 L412 512 L417.25 434 L422.25 402.5 L428.5 397.5 L432.25 390 L437.25 369 L441 350 L443.5 340 L447.25 290 L449.75 281 L452.25 295 L454.75 276 L457.25 287.5 L462 279 L467 277.5 L470.75 282.5 L474.5 287.5 L478.25 264 L480.75 262.5 L481 262 L483 280 L485 334 L487 310 L489 285 L492 280 L495.75 270 L498.25 269 L502 277.5 L507 285 L512 275 L517 270 L522 281 L525.75 252.5 L529.5 240 L533.25 241 L537 254 L540.75 259 L544.5 260 L544.5 267 L548 300 L552.5 324 L555 312 L559 282 L560 280 L567 230 L573 200 L578 217.5 L580.5 225 L584.25 200 L589.25 184 L591.75 195 L594.25 230 L598.25 280 L600.75 305 L603.25 325 L606 322 L612 292.5 L618.25 327.5 L623.25 265 L627 256 L632 257.5 L637 257.5 L639.5 292.5 L642 327.5 L644.5 270 L649.5 264 L654.5 267.5 L657 286 L659.5 330 L662 270 L666 257 L670.1 244.6 L675.6 235 L678.35 233.6 L681.1 239 L683.85 255.5 L690 248 L693.5 262 L697.5 270 L701.25 285 L703.75 287.5 L706 276 L710 255.5 L715 258 L720 295 L725 301 L728 301 L731 285 L737 262 L741.25 279 L745 262 L746 262 L752.85 229.7 L758.35 213 L763.85 194 L768 199.45 L772.1 189.8 L777.6 206.3 L783.1 211.8 L787.2 229.7 L792.7 257 L800.9 232.4 L807.8 207.7 L811.9 218.7 L814.7 235 L816.7 243.4" fill="none" stroke="#4fa000" stroke-width="2.15" stroke-linejoin="round"/><path d="M67 435 L74.5 426 L80.75 414 L87 404 L93.25 404 L99.5 407.5 L105.75 405 L112 406 L115.75 407.5 L122 404 L128.25 396 L134.5 391 L142 389 L143 385 L153 377.5 L163 357.5 L173 344 L183 332.5 L193 325 L200.5 312.5 L211 297.5 L218.5 287.5 L226 271 L231 261 L234.75 256 L241 257.5 L246 270 L250 269 L257.5 257 L265.9 250.6 L271.5 246.8 L276.2 245 L281.8 245 L285.6 247.8 L290.3 262 L295.9 277 L300 278.7 L306 280 L311 285 L316 292.5 L322 300 L329.75 299 L336 300 L342.25 302.5 L348.5 292.5 L353.5 286 L358.5 286 L363.5 292.5 L368.5 305 L376 325 L381 340 L386 350 L391 369 L396 385 L402 396 L407 410 L412 427.5 L414.75 440 L420 446 L423.5 440 L428.5 420 L436 415 L441 400 L447 377.5 L451 355 L454.75 340 L462 316 L465.75 300 L472 281 L478.25 267.5 L483.25 262.5 L490.75 285 L495.75 289 L499.5 287.5 L504.5 276 L509.5 271 L514.5 267.5 L519.5 257.5 L524.5 249 L529.5 242.5 L537 244 L544.5 247.5 L549.5 250 L555.75 256 L562 269 L567 266 L572 255 L577 242.5 L580.75 232.5 L585.75 231 L592 217 L598 220 L602 230 L607 255 L610.75 269 L618.25 275 L625.75 276 L632 282.5 L637 287.5 L642 286 L649.5 290 L657 296 L663.25 287 L671.5 279 L679.7 268 L686.6 258 L693.5 248.7 L699 248.7 L704.5 253 L710 251.4 L716.8 244.6 L723.7 246 L729.2 252.8 L734.7 251.4 L740.2 243 L743.25 239.3 L751.5 232.4 L759.7 227 L766.6 216 L773.5 207.7 L780.3 206.3 L787.2 205 L792.7 211.8 L798.2 222.8 L803.7 216 L809.2 209 L816 207.7" fill="none" stroke="#00ccff" stroke-width="2.15" stroke-linejoin="round"/><path d="M67 422.5 L75.75 409 L82 374 L86 365 L91 365 L98 378 L103.25 385 L108.25 385 L114.5 394.4 L118.25 394 L123.25 389 L128.25 384 L134 372 L138 370 L143 370 L154.25 349 L168 330 L175.5 320 L183 307.5 L189.75 299 L203.5 271 L211 259 L219.75 232.5 L226 207.5 L228 203 L232.25 204 L237.25 211 L239.75 225 L242.25 241 L246 234 L251 207.5 L253 201 L258.5 210 L260.3 212 L266.9 226 L270.6 225 L278.1 217 L282.8 224.4 L284.6 243 L287.5 271 L291.2 292 L292.25 294 L296 290 L302.25 276 L307.25 277.5 L312.25 285 L316 296 L321 307 L323.5 306 L326 300 L332 300 L338.5 302.5 L343.5 304 L348.5 296 L353.5 284 L357.25 279 L362.25 287.5 L367.25 302.5 L372.25 322.5 L376 343.75 L381 350 L386 365 L389.75 384 L393.5 396 L396 398 L399.75 396 L402.25 412.5 L403.5 440 L412 477 L419 445 L422.25 421 L426 402.5 L428.5 399 L434.75 371 L439.75 340 L448.5 265 L449.2 263 L454.5 244 L463.2 224 L467.6 217.7 L473.7 214.2 L479 217.7 L482 224 L485.75 239 L490 240 L496 225 L499.5 219 L503.25 224 L507 227.5 L512 222.5 L517 212.5 L522 212 L527 212.5 L533.25 219 L537 225 L542 231 L545.75 234 L549.5 247.5 L553.25 256 L555.75 259 L559.5 250 L562 238 L565.5 230 L570.5 200 L575.5 180 L580.5 170 L585.5 156 L590.5 144 L594.25 146 L598 167.5 L600.5 192.5 L603 220 L605.75 242.5 L609.5 255 L614.5 246 L618.25 244 L624.5 249 L629.5 257.5 L634.5 267.5 L639.5 270 L644.5 276 L649.5 271 L654.5 275 L655 275 L660.5 276 L666 260 L671.5 250 L677 244.6 L682.5 237.7 L688 221 L692.1 211 L696.2 214.3 L701.7 225 L705.8 232 L710 221 L716.8 207.5 L722.3 220 L727.8 237.7 L731.9 237 L737.4 226.7 L740.5 221.4 L746 220 L751.5 213 L758.35 185.7 L763.85 178.8 L769.3 173.35 L774.8 170.6 L780.3 172 L785.8 165.8 L789.25 177.5 L792.7 190 L796.8 198 L800.25 201.5 L805 192.6 L810.55 183 L816 181.6" fill="none" stroke="#ffcc00" stroke-width="2.15" stroke-linejoin="round"/><path d="M67 451 L73.25 430 L78.25 409 L83.9 391 L89.5 404 L94.5 417.5 L98.25 424 L103.25 421 L107 419 L112 430 L117 426 L122 417.5 L127 410 L132 401 L137 397.5 L142 399 L145 386 L150.5 377.5 L163 360 L173 347.5 L181.75 337.5 L188 332.5 L193 327.5 L198 312.5 L203 297.5 L211 297.5 L218.5 269 L223.5 254 L229.75 225 L234.75 250 L241 287.5 L246 269 L253.5 234 L258.5 244 L263.5 260 L268.5 262.5 L273.5 252.5 L283.5 275 L286 300 L288 340 L291 350 L297 330 L303.5 309 L308.5 317.5 L316 331 L326 331 L333.5 337.5 L338.5 339.4 L343.5 336 L346 325 L353.5 310 L357.25 312.5 L363.5 327.5 L367 350 L372 390 L380 392 L383.5 409 L386 421 L388.5 440 L398 432 L405 505 L412 525 L417 505 L422.25 437.5 L424.75 422.5 L428.5 417.5 L433.5 402.5 L437.25 377.5 L441 359 L443.5 340 L447.25 271 L449.2 263 L453.6 255.3 L458 258.8 L463.2 247.45 L469.3 246.6 L475.45 251.8 L480 256 L484.5 270 L487 281 L489.5 275 L492 252.5 L495.75 231 L498.25 244 L500.75 262.5 L505.75 264 L512 256 L519.5 245 L524.5 249 L529.5 254 L534.5 261 L539.5 269 L544.5 271 L548.25 287.5 L551 295 L557 285 L562 272 L566.75 230 L576.75 192.5 L583 200 L586.75 186 L590.5 172.5 L594.25 190 L598 207.5 L599.5 242.5 L603.25 292.5 L605.75 309 L609.5 307.5 L614.5 285 L618.25 286 L624.5 300 L632 316 L637 310 L643.25 317.5 L649.5 316 L655.75 322.5 L663.25 290 L671.5 286 L678.35 276 L683.85 262 L689.3 239 L693.5 248.7 L699 262 L704.5 276 L710 248.7 L712.7 228 L718.2 242 L723.7 265 L727.8 279 L733.3 265 L738.8 251.4 L741.9 251.65 L751.5 235 L759.7 209 L765.2 203.6 L770.7 200.8 L776.2 205 L784.45 196.7 L787.2 218.7 L790 239 L795.4 243.4 L800.9 232.4 L806.4 218.7 L811.9 214.6 L816.7 217.3" fill="none" stroke="#606060" stroke-width="2.15" stroke-linejoin="round"/><path d="M67 605 L68 592 L72 591 L74 576 L77 570 L78 480 L79.5 434 L80.75 432.5 L82 455 L83.9 480 L86 560 L88 582 L91 560 L93 540 L96 535 L99 520 L102 480 L104.5 455 L107 457.5 L108.5 517 L110 531 L112 452.5 L114.5 432.5 L117 417.5 L122 411 L124.5 427.5 L127 399 L129.5 372 L133.25 376 L135.75 405 L138.25 424 L140.75 392.5 L143 370 L146.75 339 L149.25 342.5 L150.5 370 L153 355 L155.5 362.5 L158 350 L161.75 347.5 L165.5 367.5 L168 361 L170.5 327.5 L173 321 L175.5 342.5 L179.25 346 L183 351 L188 354 L191 356 L192 355 L194 325 L199.75 300 L200.4 266 L201.6 300 L204 300 L207 320 L210 283 L216 262 L217.25 219 L218.5 172 L219.75 219 L221 200 L222 222 L223.5 206 L225 152 L226 137 L228 160 L228.5 225 L231 250 L232.25 290 L233.5 300 L235 315 L240 337 L243.5 300 L244.75 200 L246 125 L249 97 L251 69 L252 95 L253.5 200 L256 247.5 L258.5 252.5 L262 255 L266 330 L268 335 L272 245 L277 260 L280 340 L282 390 L283 405 L286 411 L288 412.5 L289 453 L292 435 L293.5 404 L294.75 365 L296 300 L298 296 L301 340 L302.25 415 L303.5 440 L304.5 474 L309.5 470 L312 497.5 L316 492.5 L318 430 L318.5 409 L319.75 371 L322.25 355 L323.5 340 L324.75 340 L326 384 L328.5 421 L331 442 L334.5 437.5 L337 435 L341 427.5 L341.6 381 L344.1 356 L346.6 352.5 L347.25 340 L349 310 L352.25 340 L353.5 365 L354.75 396 L356 427.5 L357.25 440 L359.5 505 L362 512 L364 585 L366 608 L368 618 L369 596 L371 585 L372 606 L374 628 L378 634 L380 670 L381 708 L383 718 L386 732 L388 710 L389 682 L390 644 L391 600 L394 530 L397 497 L399 580 L404 590 L410 596 L412 590 L413 505 L414 440 L416 340 L418.5 300 L420.4 285 L422.9 301 L424.1 340 L424.1 385 L427.25 392.5 L429.75 407.5 L431.6 365 L433.5 340 L434.75 266 L437.25 240 L438 177 L440 160 L442 135 L443 105 L445 110 L445 137 L447 160 L448 170 L449 205 L450 177 L452 205 L455 200 L458 230 L460 172 L462 221 L464 240 L466 258 L469.5 256 L472 265 L477 281 L479 305 L479.5 300 L482 342 L482 342 L484 380 L486.5 355 L488.25 300 L490 102 L492 100 L494 89 L496 100 L497 200 L498.25 275 L499.5 300 L502 281 L507 300 L509.5 300 L512 260 L514.5 211 L515.75 237.5 L517 300 L519.5 269 L520.75 300 L521 360 L522 337 L523 318 L527 327 L531 355 L534 395 L537 410 L540 367 L542 365 L545 422 L548 372 L551 370 L552 405 L555 337 L558 230 L560 130 L562 82 L565 52 L566 33 L567 52 L568 97 L570 132 L573 122 L576 135 L578 230 L582 117 L585 95 L587 54 L590 57 L591 110 L592 230 L594 305 L598 355 L600 380 L602 405 L605 422 L607 392 L608 330 L610 290 L612 268 L613.25 305 L615.75 330 L617 380 L620 405 L622 430 L623 445 L625 455 L627 467 L630.5 512.5 L631.5 505 L632 467.5 L633 430 L635.75 392.5 L638.25 369 L640.75 417.5 L641 446 L643.5 464 L644 450 L645 450 L646.5 437.5 L647.5 437.5 L648 474 L649.5 502.5 L651 515 L653 502.5 L654 490 L655 460 L656.5 457.5 L657 430 L658.25 392.5 L659.5 355 L662 300 L664 240 L665 325 L670 350 L673 325 L677 320 L680 300 L683 150 L685 122 L686 145 L687 165 L688 185 L690 218 L692 275 L697 337 L702 347 L705 337 L707 237 L708 155 L711 144 L713 160 L715 193 L718 345 L722 330 L726 340 L730 205 L732 184 L734 205 L736 275 L740 317 L744 250 L747 277 L752 180 L755 150 L756 119 L758 140 L760 150 L762 205 L764 200 L768 250 L772 275 L776 317 L779 250 L781 170 L782 120 L784 135 L786 170 L788 230 L791 346 L795 315 L797 290 L802 218 L807 238 L811 255 L816 270" fill="none" stroke="#a2ff12" stroke-width="2.15" stroke-linejoin="round"/><path d="M67 446 L72 417.5 L75.75 399 L79.5 387.5 L82 374 L87 396 L92 412.5 L97 426 L100.75 422.5 L105.75 415 L108.25 415 L110.75 434 L114.5 425 L118.25 415 L123.25 405 L127 395 L130.75 385 L133.25 382.5 L138.25 386 L140.75 390 L144.25 380 L148 357.5 L150.5 352.5 L153 355 L156.75 350 L161.75 342.5 L166.75 342 L170.5 338.75 L173 332.5 L176.75 330 L181.75 326 L185.5 322.5 L190.5 320 L194.25 315 L196.1 305 L197.25 300 L198.5 286 L202.25 281 L204.75 280 L207.25 287.5 L213.5 262.5 L219.75 236 L223 234 L226 214 L228.75 199 L231 202.5 L234.75 237.5 L239.75 292.5 L243.5 275 L248.5 231 L252.5 195 L256 219 L258.5 234 L262.25 246 L264.75 270 L268.5 259 L272.25 240 L276 236 L278.5 251 L282 260 L283.5 281 L285 312 L286 337 L288 362 L289 377 L291 350 L295 327 L298.5 306 L301.6 291 L303.5 302 L306 314 L311 322 L313.5 327 L316 346 L318.5 345 L322 320 L324.75 314 L327 320 L331 329 L335 330 L337 334 L341 329 L346 312 L351 295 L353.5 289 L357 302 L362 325 L366 340 L368.5 350 L371 371 L373 392 L376 392.5 L381 387 L383.5 396 L385 415 L386 440 L389 462 L397 432 L401 447 L406 527 L411 547 L414 520 L418.5 440 L419.75 402 L423 379 L424.75 387 L426 395 L428.5 397 L431 396 L432.25 386 L434.75 370 L436 340 L442.2 265 L444.9 238.7 L446.6 228 L448.8 234 L451.4 220.35 L453.6 230 L456.2 239.6 L458.4 231.7 L460.6 224 L463.2 230 L466.7 233.5 L470.2 237.8 L473.7 239.6 L477.2 245.7 L480 249 L483.25 262.5 L485.75 286 L487 290 L489.5 275 L492 237.5 L494.5 182 L497 190 L499.5 229 L502 250 L505.75 252.5 L507.6 261 L510.75 250 L514.5 234 L518.25 230 L520.75 235 L523.25 240 L528.25 245 L533.25 254 L537 264 L540.75 261 L544.5 262.5 L545 280 L548.75 300 L550.5 309 L553.75 286 L557 275 L559.5 272.5 L561.75 235 L564.25 210 L566.1 180 L568 174 L571.1 172.5 L573.6 162.5 L576.75 167.5 L579.25 189 L581.1 194 L583 184 L585.5 164 L588 150 L591.1 145 L593 155 L595.5 180 L596.75 205 L597 210 L598.75 280 L601.25 305 L602.5 320 L604.4 336 L607.5 311 L611.25 286 L613.25 274 L613.25 274 L615.1 272.5 L617.6 280 L619.5 291 L622 285 L624.5 295 L628.25 306 L632 312.5 L635.75 307.5 L638.25 300 L640.75 307.5 L643.25 320 L648.25 311 L652 316 L655.75 322.5 L659.5 310 L660.5 290 L663.25 275 L667.4 273.4 L670.1 276 L674.2 272 L678.35 268 L681.1 261 L683.85 235 L685.9 210 L688 203.35 L690 214 L692.1 232 L694.8 246 L699 257 L703.1 269 L705.1 275 L707.2 258 L709.25 221 L712.7 195 L715.4 213 L718.2 233.6 L722.3 257 L726.4 273.4 L730.55 253 L734 232 L736.7 228 L737.75 230 L740.5 243.4 L742.55 249 L746 238 L750.1 224 L754.2 209 L757 191 L759.7 181.6 L763.85 187 L768 185.7 L772.1 187 L775.5 195 L778.3 206 L781.7 191 L785.1 179 L787.2 198 L789.25 232 L790.6 243.4 L795.4 242 L798.2 236.5 L800.9 223 L805.05 208 L808.5 201 L811.9 205 L814.7 209 L817 215" fill="none" stroke="#aa00ff" stroke-width="2.15" stroke-linejoin="round"/></g><g shape-rendering="crispEdges"><rect x="63" y="733" width="757" height="1" fill="#555050"/><rect x="66" y="31" width="1" height="706" fill="#555050"/></g><path d="M819.5 730.6 L824 733.5 L819.5 736.4 Z" fill="#800000"/><path d="M63.8 31 L66.5 26 L69.2 31 Z" fill="#800000"/><g font-family="Liberation Mono" font-size="10" fill="#000" stroke="#000" stroke-width="0.06"><text transform="translate(60.4,704) scale(1,1.08)" text-anchor="end">-10.0</text><text transform="translate(60.4,670) scale(1,1.08)" text-anchor="end">-9.0</text><text transform="translate(60.4,636) scale(1,1.08)" text-anchor="end">-8.0</text><text transform="translate(60.4,602) scale(1,1.08)" text-anchor="end">-7.0</text><text transform="translate(60.4,568) scale(1,1.08)" text-anchor="end">-6.0</text><text transform="translate(60.4,534) scale(1,1.08)" text-anchor="end">-5.0</text><text transform="translate(60.4,500) scale(1,1.08)" text-anchor="end">-4.0</text><text transform="translate(60.4,466) scale(1,1.08)" text-anchor="end">-3.0</text><text transform="translate(60.4,433) scale(1,1.08)" text-anchor="end">-2.0</text><text transform="translate(60.4,399) scale(1,1.08)" text-anchor="end">-1.0</text><text transform="translate(60.4,365) scale(1,1.08)" text-anchor="end">0.0</text><text transform="translate(60.4,331) scale(1,1.08)" text-anchor="end">1.0</text><text transform="translate(60.4,297) scale(1,1.08)" text-anchor="end">2.0</text><text transform="translate(60.4,263) scale(1,1.08)" text-anchor="end">3.0</text><text transform="translate(60.4,229) scale(1,1.08)" text-anchor="end">4.0</text><text transform="translate(60.4,195) scale(1,1.08)" text-anchor="end">5.0</text><text transform="translate(60.4,161) scale(1,1.08)" text-anchor="end">6.0</text><text transform="translate(60.4,127) scale(1,1.08)" text-anchor="end">7.0</text><text transform="translate(60.4,94) scale(1,1.08)" text-anchor="end">8.0</text><text transform="translate(60.4,60) scale(1,1.08)" text-anchor="end">9.0</text></g><g font-family="Liberation Mono" font-size="10" fill="#000" stroke="#000" stroke-width="0.06"><text transform="translate(103.2,746) scale(1,1.08)" text-anchor="middle">Sat</text><text transform="translate(151.6,746) scale(1,1.08)" text-anchor="middle">Mon</text><text transform="translate(200.0,746) scale(1,1.08)" text-anchor="middle">Wed</text><text transform="translate(248.4,746) scale(1,1.08)" text-anchor="middle">Fri</text><text transform="translate(296.8,746) scale(1,1.08)" text-anchor="middle">Sun</text><text transform="translate(345.2,746) scale(1,1.08)" text-anchor="middle">Tue</text><text transform="translate(393.6,746) scale(1,1.08)" text-anchor="middle">Thu</text><text transform="translate(442.0,746) scale(1,1.08)" text-anchor="middle">Sat</text><text transform="translate(490.4,746) scale(1,1.08)" text-anchor="middle">Mon</text><text transform="translate(538.8,746) scale(1,1.08)" text-anchor="middle">Wed</text><text transform="translate(587.2,746) scale(1,1.08)" text-anchor="middle">Fri</text><text transform="translate(635.6,746) scale(1,1.08)" text-anchor="middle">Sun</text><text transform="translate(684.0,746) scale(1,1.08)" text-anchor="middle">Tue</text><text transform="translate(732.4,746) scale(1,1.08)" text-anchor="middle">Thu</text><text transform="translate(780.8,746) scale(1,1.08)" text-anchor="middle">Sat</text></g><text transform="translate(441.5,18) scale(1,1.02)" text-anchor="middle" font-family="Liberation Mono" font-size="13.33" fill="#000" stroke="#000" stroke-width="0.08">3.5m Tel. Temperatures</text><text transform="translate(14.3,399.5) rotate(-90) scale(1,1.0)" font-family="Liberation Mono" font-size="11.67" fill="#000" stroke="#000" stroke-width="0.08">Deg.C</text><text transform="translate(820,6) rotate(90)" font-family="Liberation Mono" font-size="8.5" fill="#999">RRDTOOL / TOBI OETIKER</text><rect x="15.5" y="754.5" width="9" height="9" fill="#0000ff" stroke="#000" stroke-width="1" shape-rendering="crispEdges"/><text transform="translate(30,762.6) scale(1,1.07)" font-family="Liberation Mono" font-size="11.67" fill="#000" stroke="#000" stroke-width="0.08">Elevator</text><rect x="226.5" y="754.5" width="9" height="9" fill="#00ffe6" stroke="#000" stroke-width="1" shape-rendering="crispEdges"/><text transform="translate(241,762.6) scale(1,1.07)" font-family="Liberation Mono" font-size="11.67" fill="#000" stroke="#000" stroke-width="0.08">Telescope Base</text><rect x="436.5" y="754.5" width="9" height="9" fill="#ff0000" stroke="#000" stroke-width="1" shape-rendering="crispEdges"/><text transform="translate(451,762.6) scale(1,1.07)" font-family="Liberation Mono" font-size="11.67" fill="#000" stroke="#000" stroke-width="0.08">Craneway Right</text><rect x="647.5" y="754.5" width="9" height="9" fill="#e08800" stroke="#000" stroke-width="1" shape-rendering="crispEdges"/><text transform="translate(662,762.6) scale(1,1.07)" font-family="Liberation Mono" font-size="11.67" fill="#000" stroke="#000" stroke-width="0.08">Craneway Left</text><rect x="15.5" y="768.5" width="9" height="9" fill="#4fa000" stroke="#000" stroke-width="1" shape-rendering="crispEdges"/><text transform="translate(30,776.6) scale(1,1.07)" font-family="Liberation Mono" font-size="11.67" fill="#000" stroke="#000" stroke-width="0.08">Domefloor</text><rect x="226.5" y="768.5" width="9" height="9" fill="#00ccff" stroke="#000" stroke-width="1" shape-rendering="crispEdges"/><text transform="translate(241,776.6) scale(1,1.07)" font-family="Liberation Mono" font-size="11.67" fill="#000" stroke="#000" stroke-width="0.08">Telescope M1</text><rect x="436.5" y="768.5" width="9" height="9" fill="#ffcc00" stroke="#000" stroke-width="1" shape-rendering="crispEdges"/><text transform="translate(451,776.6) scale(1,1.07)" font-family="Liberation Mono" font-size="11.67" fill="#000" stroke="#000" stroke-width="0.08">Telescope Structure</text><rect x="647.5" y="768.5" width="9" height="9" fill="#606060" stroke="#000" stroke-width="1" shape-rendering="crispEdges"/><text transform="translate(662,776.6) scale(1,1.07)" font-family="Liberation Mono" font-size="11.67" fill="#000" stroke="#000" stroke-width="0.08">Telescope Top End</text><rect x="15.5" y="782.5" width="9" height="9" fill="#aaff22" stroke="#000" stroke-width="1" shape-rendering="crispEdges"/><text transform="translate(30,790.6) scale(1,1.07)" font-family="Liberation Mono" font-size="11.67" fill="#000" stroke="#000" stroke-width="0.08">Outside Temperature</text><rect x="654.5" y="782.5" width="9" height="9" fill="#aa00ff" stroke="#000" stroke-width="1" shape-rendering="crispEdges"/><text transform="translate(669,790.6) scale(1,1.07)" font-family="Liberation Mono" font-size="11.67" fill="#000" stroke="#000" stroke-width="0.08">Mean Dome Temperature</text>
</svg></body></html>
